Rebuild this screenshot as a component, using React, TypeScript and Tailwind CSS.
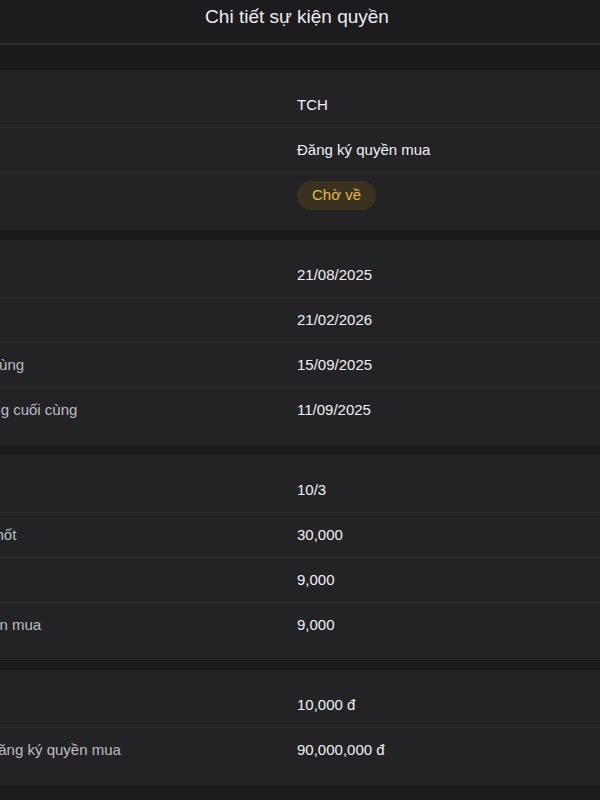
import React from 'react'

type Row = {
  label: string
  value: string
  badge?: boolean
}

const sections: Row[][] = [
  [
    { label: 'Mã chứng khoán', value: 'TCH' },
    { label: 'Loại sự kiện', value: 'Đăng ký quyền mua' },
    { label: 'Trạng thái', value: 'Chờ về', badge: true },
  ],
  [
    { label: 'Ngày GDKHQ', value: '21/08/2025' },
    { label: 'Ngày thực hiện', value: '21/02/2026' },
    { label: 'Ngày đăng ký cuối cùng', value: '15/09/2025' },
    { label: 'Ngày chuyển nhượng cuối cùng', value: '11/09/2025' },
  ],
  [
    { label: 'Tỷ lệ', value: '10/3' },
    { label: 'Số CP có tại ngày chốt', value: '30,000' },
    { label: 'Số quyền sở hữu', value: '9,000' },
    { label: 'Tổng CP được quyền mua', value: '9,000' },
  ],
  [
    { label: 'Giá mua', value: '10,000 đ' },
    { label: 'Số tiền thanh toán đăng ký quyền mua', value: '90,000,000 đ' },
  ],
]

function DetailRow({ row, last }: { row: Row; last: boolean }) {
  return (
    <div
      className={`grid grid-cols-2 items-center h-[44px] px-4 box-content ${
        last ? '' : 'border-b border-[#2e2e31]'
      }`}
    >
      <span className="pl-[7px] text-[15px] text-[#bdbdc1] whitespace-nowrap">{row.label}</span>
      <div>
        {row.badge ? (
          <span className="inline-flex items-center h-[29px] px-[15px] rounded-full bg-[#39321f] text-[15px] text-[#e8b84a]">
            {row.value}
          </span>
        ) : (
          <span className="text-[15px] text-[#f0f0f2]">{row.value}</span>
        )}
      </div>
    </div>
  )
}

export default function App() {
  return (
    <div
      className="w-full h-[800px] overflow-hidden bg-[#1c1c1e]"
      style={{ fontFamily: '"Liberation Sans", Arial, sans-serif' }}
    >
      <div className="w-[912px] -ml-[159px]">
        {/* header */}
        <div className="h-[45px] pt-[5px] text-center border-b-2 border-[#2f2f31] bg-[#1c1c1e]">
          <h1 className="text-[19px] leading-6 text-[#ececee]">Chi tiết sự kiện quyền</h1>
        </div>

        <div className="flex flex-col gap-[10px] pt-[25px] bg-[#1b1b1d]">
          {sections.map((rows, i) => (
            <div key={i} className="bg-[#232326] py-[13px]">
              {rows.map((row, j) => (
                <DetailRow key={j} row={row} last={j === rows.length - 1} />
              ))}
            </div>
          ))}
        </div>
      </div>
    </div>
  )
}
